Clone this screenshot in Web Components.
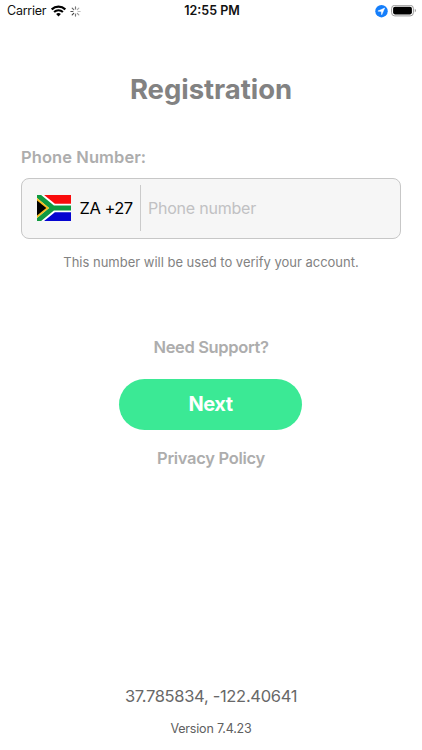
<!DOCTYPE html>
<html lang="en">
<head>
<meta charset="utf-8">
<title>Registration</title>
<style>
html, body { margin: 0; height: 100%; background: #fff; }
body { font-family: Inter, "Liberation Sans", sans-serif; overflow: hidden; }
</style>
</head>
<body>
<registration-screen></registration-screen>
<script>
const define = (name, html) => customElements.define(name, class extends HTMLElement {
  constructor() {
    super();
    this.attachShadow({ mode: "open" }).innerHTML = html;
  }
});

define("wifi-icon", `
<style>:host{display:block;width:15px;height:12px} svg{display:block}</style>
<svg width="15" height="12" viewBox="0 0 15 12" fill="none" stroke="#000">
  <path d="M.7 4.4a9.6 9.6 0 0 1 13.6 0" stroke-width="2.3"/>
  <path d="M3.1 7a6.2 6.2 0 0 1 8.8 0" stroke-width="2"/>
  <path d="M7.5 11.6 5.1 9.1a3.5 3.5 0 0 1 4.8 0z" fill="#000" stroke="none"/>
</svg>`);

define("activity-icon", `
<style>:host{display:block;width:11px;height:11px} svg{display:block}</style>
<svg width="11" height="11" viewBox="-5.5 -5.5 11 11" stroke-width="1.2" stroke-linecap="round">
  <path d="M0-2.6V-4.6" stroke="#777"/>
  <path d="M1.8-1.8 3.3-3.3" stroke="#aaa"/>
  <path d="M2.6 0H4.6" stroke="#bbb"/>
  <path d="M1.8 1.8 3.3 3.3" stroke="#999"/>
  <path d="M0 2.6V4.6" stroke="#777"/>
  <path d="M-1.8 1.8-3.3 3.3" stroke="#444"/>
  <path d="M-2.6 0H-4.6" stroke="#555"/>
  <path d="M-1.8-1.8-3.3-3.3" stroke="#666"/>
</svg>`);

define("location-icon", `
<style>:host{display:block;width:13px;height:13px} svg{display:block}</style>
<svg width="13" height="13" viewBox="0 0 13 13">
  <circle cx="6.5" cy="6.2" r="6.2" fill="#147efb"/>
  <path d="M9.7 3 2.9 6.1 6.3 6.5 6.7 9.8z" fill="#fff" stroke="#fff" stroke-width=".5" stroke-linejoin="round"/>
</svg>`);

define("battery-icon", `
<style>:host{display:block;width:26px;height:12px} svg{display:block}</style>
<svg width="26" height="12" viewBox="0 0 26 12">
  <rect x=".6" y=".3" width="21.8" height="10.6" rx="3.2" fill="#fff" stroke="#999"/>
  <rect x="2.1" y="1.8" width="18.8" height="7.6" rx="1.8" fill="#000"/>
  <path d="M23.8 3.8v3.6c1.4-.6 1.4-3 0-3.6z" fill="#888"/>
</svg>`);

define("status-bar", `
<style>
:host{display:grid;grid-template-columns:1fr auto 1fr;align-items:center;height:22px;padding:0 5px 0 7px;font-size:12.5px;line-height:22px;color:#111}
.left,.right{display:flex;align-items:center}
.left span{width:39px;white-space:nowrap;letter-spacing:-.25px}
wifi-icon{margin-left:5px} activity-icon{margin-left:4px}
.time{font-weight:600;letter-spacing:0}
.right{justify-content:flex-end;gap:3px}
</style>
<div class="left"><span>Carrier</span><wifi-icon></wifi-icon><activity-icon></activity-icon></div>
<div class="time">12:55 PM</div>
<div class="right"><location-icon></location-icon><battery-icon></battery-icon></div>`);

define("flag-za", `
<style>:host{display:block;width:34px;height:26px} svg{display:block}</style>
<svg width="34" height="26" viewBox="0 0 34 26">
  <rect width="34" height="13" fill="#fa0c0c"/>
  <rect y="13" width="34" height="13" fill="#0505d0"/>
  <path d="M-1-1 16.3 13-1 27M15 13H34" fill="none" stroke="#fff" stroke-width="8.6"/>
  <path d="M-2-1.8 16 13-2 27.8M15 13H34" fill="none" stroke="#109a40" stroke-width="5"/>
  <path d="M0 3 12.2 13 0 23z" fill="#f5bd20"/>
  <path d="M0 5.4 9.3 13 0 20.6z" fill="#000"/>
</svg>`);

define("phone-field", `
<style>
:host{display:flex;align-items:center;box-sizing:border-box;height:61px;border:1px solid #c7c7c7;border-radius:8px;background:#f6f6f6;padding-left:15px;font-size:16.5px}
.code{margin-left:8.5px;width:60.5px;color:#000;white-space:nowrap;letter-spacing:-.5px}
.rule{width:1px;height:46px;background:#cbcbcb}
.hint{margin-left:7px;color:#c1c1c3;font-size:16px;white-space:nowrap;letter-spacing:-.22px}
</style>
<flag-za></flag-za><span class="code"><slot name="code"></slot></span><span class="rule"></span><span class="hint"><slot></slot></span>`);

define("pill-button", `
<style>:host{display:flex;align-items:center;justify-content:center;box-sizing:border-box;width:183px;height:51px;padding-bottom:1px;border-radius:26px;background:#3be995;color:#fff;font-size:20px;font-weight:700;letter-spacing:-.5px}</style>
<slot></slot>`);

define("registration-screen", `
<style>
:host{display:flex;flex-direction:column;height:750px;width:422px;background:#fff}
main{display:flex;flex-direction:column;align-items:center;flex:1;padding:0 21px}
h1{margin:49px 0 0;font-size:27.5px;line-height:36px;font-weight:700;color:#828282;letter-spacing:-.05px}
.label{align-self:flex-start;margin-top:38px;height:24px;line-height:24px;font-size:16.5px;font-weight:600;color:#adadad;letter-spacing:.08px}
phone-field{align-self:stretch;margin-top:8.5px;width:380px}
.note{margin-top:13.5px;font-size:13px;line-height:20px;color:#828282;letter-spacing:-.01px}
.link{font-size:16.5px;line-height:24px;font-weight:600;color:#adadad;letter-spacing:-.35px}
.support{margin-top:63px}
pill-button{margin-top:20px;margin-right:1px}
.privacy{margin-top:16px;letter-spacing:-.3px}
footer{display:flex;flex-direction:column;align-items:center;color:#686868;margin-bottom:11px}
.coords{font-size:16.5px;line-height:24px;letter-spacing:-.31px}
.version{margin-top:11px;font-size:12.5px;line-height:20px;color:#606060;letter-spacing:-.18px}
</style>
<status-bar></status-bar>
<main>
<h1>Registration</h1>
<div class="label">Phone Number:</div>
<phone-field><span slot="code">ZA +27</span>Phone number</phone-field>
<div class="note">This number will be used to verify your account.</div>
<div class="link support">Need Support?</div>
<pill-button>Next</pill-button>
<div class="link privacy">Privacy Policy</div>
</main>
<footer><div class="coords">37.785834, -122.40641</div><div class="version">Version 7.4.23</div></footer>`);
</script>
</body>
</html>
